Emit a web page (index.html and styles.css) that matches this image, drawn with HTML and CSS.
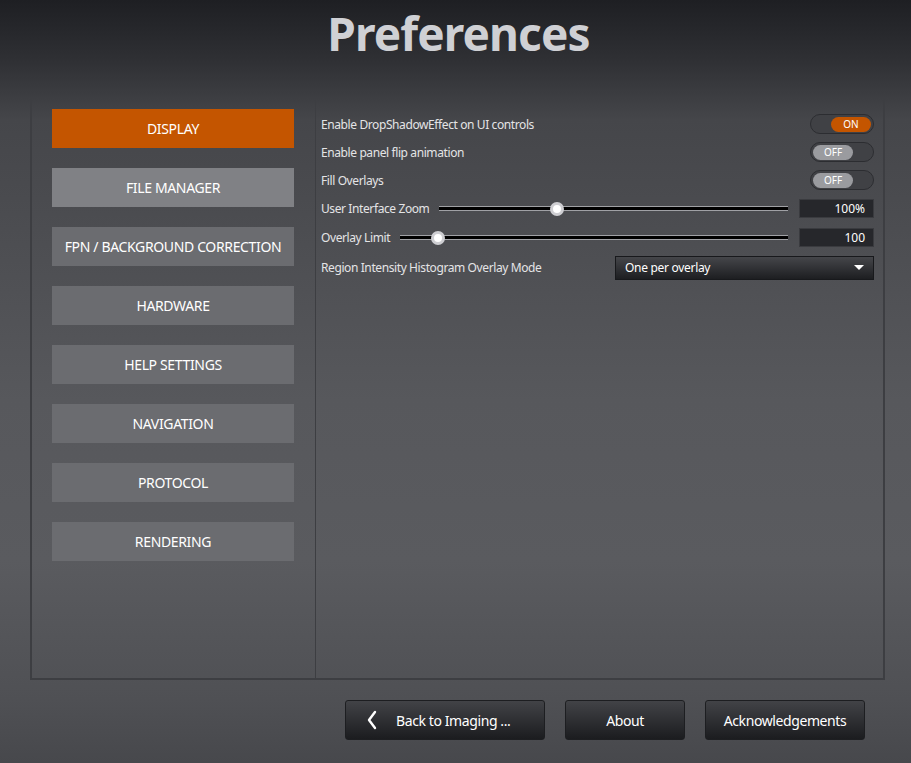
FILE: index.html
```html
<!DOCTYPE html>
<html>
<head>
<meta charset="utf-8">
<link rel="stylesheet" href="styles.css">
</head>
<body>
<div class="page">
  <h1 class="title">Preferences</h1>
  <div class="panel">
    <nav class="nav">
      <div class="nav-btn active">DISPLAY</div>
      <div class="nav-btn hover">FILE MANAGER</div>
      <div class="nav-btn">FPN / BACKGROUND CORRECTION</div>
      <div class="nav-btn">HARDWARE</div>
      <div class="nav-btn">HELP SETTINGS</div>
      <div class="nav-btn">NAVIGATION</div>
      <div class="nav-btn">PROTOCOL</div>
      <div class="nav-btn">RENDERING</div>
    </nav>
    <div class="content">
      <div class="row">
        <span class="label">Enable DropShadowEffect on UI controls</span>
        <div class="toggle on"><span class="knob">ON</span></div>
      </div>
      <div class="row">
        <span class="label">Enable panel flip animation</span>
        <div class="toggle"><span class="knob">OFF</span></div>
      </div>
      <div class="row">
        <span class="label">Fill Overlays</span>
        <div class="toggle"><span class="knob">OFF</span></div>
      </div>
      <div class="row row-slider">
        <span class="label">User Interface Zoom</span>
        <div class="slider"><div class="track"></div><div class="thumb" style="left: 33.8%"></div></div>
        <div class="value">100%</div>
      </div>
      <div class="row row-slider">
        <span class="label">Overlay Limit</span>
        <div class="slider"><div class="track"></div><div class="thumb" style="left: 9.8%"></div></div>
        <div class="value">100</div>
      </div>
      <div class="row row-select">
        <span class="label">Region Intensity Histogram Overlay Mode</span>
        <div class="select"><span>One per overlay</span><span class="caret"></span></div>
      </div>
    </div>
  </div>
  <div class="footer">
    <div class="btn btn-back"><svg class="chev" width="12" height="20" viewBox="0 0 12 20"><path d="M9 2 L3 10 L9 18" fill="none" stroke="#ffffff" stroke-width="2.4" stroke-linecap="round" stroke-linejoin="round"/></svg><span>Back to Imaging ...</span></div>
    <div class="btn btn-about">About</div>
    <div class="btn btn-ack">Acknowledgements</div>
  </div>
</div>
</body>
</html>
```

FILE: styles.css
```css
html, body {
  margin: 0;
  padding: 0;
}
body {
  width: 911px;
  height: 763px;
  overflow: hidden;
  font-family: "Noto Sans", "Open Sans", sans-serif;
  background: linear-gradient(to bottom, #1e1f23 0px, #2f3034 60px, #45464a 120px, #57585c 400px, #5a5b5f 560px, #4f5054 700px, #47484c 763px);
  color: #ffffff;
}
.page {
  display: flex;
  flex-direction: column;
  height: 763px;
}
.title {
  margin: 0;
  height: 97px;
  box-sizing: border-box;
  padding-top: 3px;
  text-align: center;
  font-family: "Noto Sans", sans-serif;
  font-weight: 700;
  font-size: 46px;
  line-height: 60px;
  color: #cfd0d4;
  letter-spacing: -0.9px;
  padding-left: 6px;
}
.panel {
  margin-left: 30px;
  width: 855px;
  height: 583px;
  box-sizing: border-box;
  border-left: 2px solid #3d3e42;
  border-right: 2px solid #3d3e42;
  border-bottom: 2px solid #3d3e42;
  display: flex;
}
.nav {
  width: 284px;
  flex: none;
  box-sizing: border-box;
  border-right: 1px solid #3d3e42;
  padding: 12px 0 0 20px;
  display: flex;
  flex-direction: column;
  gap: 20px;
}
.nav-btn {
  width: 242px;
  height: 39px;
  background: #6b6c70;
  display: flex;
  align-items: center;
  justify-content: center;
  font-size: 14px;
  color: #ffffff;
  letter-spacing: -0.35px;
}
.nav-btn.active {
  background: #c45500;
}
.nav-btn.hover {
  background: #808185;
}
.content {
  flex: 1;
  padding: 13px 9px 0 5px;
  display: flex;
  flex-direction: column;
}
.row {
  height: 28px;
  display: flex;
  align-items: center;
  gap: 10px;
}
.row-slider {
  height: 29px;
}
.row-select {
  height: 31px;
}
.label {
  font-size: 12px;
  color: #e4e4e6;
  white-space: nowrap;
  letter-spacing: -0.4px;
}
.toggle {
  margin-left: auto;
  width: 64px;
  height: 20px;
  box-sizing: border-box;
  border: 1px solid #2c2d31;
  border-radius: 10px;
  background: #404145;
  display: flex;
  align-items: center;
  padding: 0 2px;
}
.toggle .knob {
  width: 40px;
  height: 15px;
  border-radius: 8px;
  background: #9a9b9f;
  font-size: 10px;
  line-height: 15px;
  text-align: center;
  color: #ffffff;
}
.toggle.on {
  justify-content: flex-end;
}
.toggle.on .knob {
  background: #c45500;
}
.slider {
  flex: 1;
  position: relative;
  height: 14px;
  display: flex;
  align-items: center;
}
.track {
  width: 100%;
  height: 3px;
  background: #000000;
  border-top: 1px solid #a0a1a5;
  border-bottom: 1px solid #a0a1a5;
  box-sizing: content-box;
}
.thumb {
  position: absolute;
  top: 0;
  width: 8px;
  height: 8px;
  margin-left: -7px;
  border-radius: 50%;
  background: #ffffff;
  border: 3px solid rgba(190, 190, 195, 0.75);
}
.value {
  width: 75px;
  height: 19px;
  box-sizing: border-box;
  background: #26272b;
  border: 1px solid #3a3b3f;
  font-size: 12px;
  line-height: 17px;
  text-align: right;
  padding-right: 8px;
  margin-left: 1px;
}
.select {
  margin-left: auto;
  width: 259px;
  height: 24px;
  box-sizing: border-box;
  border: 1px solid #18191c;
  background: linear-gradient(to bottom, #45464a, #1d1e21);
  display: flex;
  align-items: center;
  justify-content: space-between;
  padding: 0 9px 0 9px;
  font-size: 12px;
  color: #ffffff;
  letter-spacing: -0.3px;
}
.caret {
  width: 0;
  height: 0;
  border-left: 5px solid transparent;
  border-right: 5px solid transparent;
  border-top: 5px solid #ffffff;
}
.footer {
  display: flex;
  gap: 20px;
  padding: 20px 0 0 345px;
}
.btn {
  height: 40px;
  box-sizing: border-box;
  border: 1px solid #1d1e21;
  border-radius: 3px;
  background: linear-gradient(to bottom, #424347, #1b1c1f);
  display: flex;
  align-items: center;
  justify-content: center;
  font-size: 14px;
  color: #ffffff;
  letter-spacing: -0.4px;
}
.btn-back {
  width: 200px;
  justify-content: flex-start;
  padding-left: 20px;
  gap: 18px;
}
.btn-about {
  width: 120px;
}
.btn-ack {
  width: 160px;
}
```
